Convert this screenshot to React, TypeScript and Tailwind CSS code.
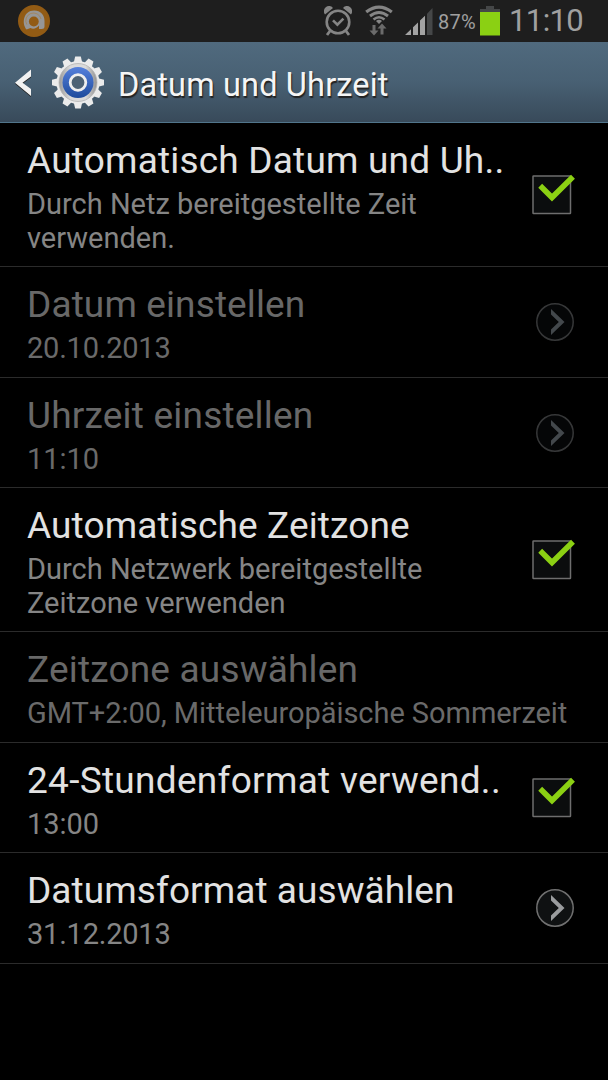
import React from "react";
import { clsx } from "clsx";

type Control = "check" | "more" | "none";

interface Setting {
  title: string;
  summary: string[];
  control: Control;
  disabled?: boolean;
  // row height including the divider
  height: string;
  tracking?: string;
  summaryTracking?: string;
}

const SETTINGS: Setting[] = [
  {
    title: "Automatisch Datum und Uh..",
    summary: ["Durch Netz bereitgestellte Zeit", "verwenden."],
    control: "check",
    height: "h-[144px]",
    tracking: "tracking-[0.2px]",
    summaryTracking: "tracking-[0px]",
  },
  {
    title: "Datum einstellen",
    summary: ["20.10.2013"],
    control: "more",
    disabled: true,
    height: "h-[111px]",
    summaryTracking: "tracking-[-0.22px]",
  },
  { title: "Uhrzeit einstellen", summary: ["11:10"], control: "more", disabled: true, height: "h-[110px]", tracking: "tracking-[0.2px]" },
  {
    title: "Automatische Zeitzone",
    summary: ["Durch Netzwerk bereitgestellte", "Zeitzone verwenden"],
    control: "check",
    height: "h-[144px]",
    summaryTracking: "tracking-[0px]",
  },
  {
    title: "Zeitzone auswählen",
    summary: ["GMT+2:00, Mitteleuropäische Sommerzeit"],
    control: "none",
    disabled: true,
    height: "h-[111px]",
    tracking: "tracking-[0.18px]",
  },
  {
    title: "24-Stundenformat verwend..",
    summary: ["13:00"],
    control: "check",
    height: "h-[110px]",
    tracking: "tracking-[0.29px]",
  },
  {
    title: "Datumsformat auswählen",
    summary: ["31.12.2013"],
    control: "more",
    height: "h-[111px]",
    tracking: "tracking-[0.08px]",
    summaryTracking: "tracking-[-0.22px]",
  },
];

function AvastIcon() {
  return (
    <svg width="32" height="32" viewBox="0 0 32 32" fill="none">
      <circle cx="16" cy="16" r="16" fill="#925b14" />
      <path d="M8.600 24.500C3.500 19 5 5.500 16.200 5.500C22.500 5.500 26.500 10 26.500 16V21.500Q26.500 24 23.500 24H21V20.500C19 23.500 15 24.500 12.500 23Z" fill="#969696" />
      <circle cx="15.800" cy="16.500" r="4.900" fill="#925b14" />
      <path d="M8.800 19.500A7.700 7.700 0 1 1 23 14" stroke="#a87f49" strokeWidth="0.700" />
    </svg>
  );
}

function AlarmIcon() {
  return (
    <svg width="28" height="30" viewBox="0 0 28 30" fill="none" stroke="#858585">
      <circle cx="14" cy="16" r="11.300" strokeWidth="2.600" />
      <path d="M9 14.300l4.400 4.400 6-6" strokeWidth="2.600" />
      <path d="M6 25l-3 4M22 25l3 4" strokeWidth="2.800" />
      <path d="M1 8.500A5 5 0 0 1 9 2zM27 8.500A5 5 0 0 0 19 2z" fill="#858585" stroke="none" />
    </svg>
  );
}

function WifiIcon() {
  return (
    <svg width="28" height="31" viewBox="0 0 28 31" fill="none" stroke="#858585">
      <path d="M1.200 7Q14-2.800 26.800 7" strokeWidth="3.200" />
      <path d="M5 11Q14 3.800 23 11" strokeWidth="2.900" />
      <path d="M8.500 14.500Q14 10 19.500 14.500" strokeWidth="2.600" />
      <path d="M11 16Q14 13.500 17 16L14 19z" fill="#858585" stroke="none" />
      <path d="M9 20v7M17 29.500v-8" stroke="#6b6b6b" strokeWidth="3" />
      <path d="M4.500 25.500h9L9 30.500zM12.500 23.500h9L17 18.500z" fill="#6b6b6b" stroke="none" />
    </svg>
  );
}

function SignalIcon() {
  return (
    <svg width="28" height="27" viewBox="0 0 28 27">
      <path d="M0 27L6 21.200V27zM8 27V19.300L13 14.500V27zM15 27V12.500L20 7.700V27z" fill="#a3a3a3" />
      <path d="M22 27V5.800L27.500 0V27z" fill="#454748" />
    </svg>
  );
}

function BatteryIcon() {
  return (
    <svg width="20" height="30" viewBox="0 0 20 30">
      <path d="M6 0h8v3h6v4H0V3h6z" fill="#454748" />
      <path d="M0 6h20v23.500H0z" fill="#8bd013" />
    </svg>
  );
}

function StatusBar() {
  return (
    <div className="flex h-[42px] shrink-0 items-start bg-[#1e1e1e] pl-[18px] pt-[5px] text-[#a0a0a0]">
      <AvastIcon />
      <div className="ml-[274px] mt-px">
        <AlarmIcon />
      </div>
      <div className="ml-[13px]">
        <WifiIcon />
      </div>
      <div className="ml-[12px] mt-[3px]">
        <SignalIcon />
      </div>
      <span className="ml-[5px] mt-[5px] w-[42px] whitespace-nowrap text-[20px] leading-[24px] tracking-[0.2px]">87%</span>
      <div className="mt-px">
        <BatteryIcon />
      </div>
      <span className="ml-[9px] mt-[-4px] whitespace-nowrap text-[31px] leading-[40px] tracking-[-0.6px]">11:10</span>
    </div>
  );
}

const TEETH = Array.from({ length: 12 }, (_, i) => i * 30);

function GearIcon() {
  return (
    <svg width="52" height="53" viewBox="-26 -26.500 52 53">
      <defs>
        <linearGradient id="hub" x1="0" y1="0" x2="0" y2="1">
          <stop offset="0" stopColor="#5580dc" />
          <stop offset="1" stopColor="#1e4b9c" />
        </linearGradient>
        <linearGradient id="steel" x1="0" y1="0" x2="1" y2="0">
          <stop offset="0" stopColor="#999999" />
          <stop offset="0.300" stopColor="#dadada" />
          <stop offset="0.700" stopColor="#dadada" />
          <stop offset="1" stopColor="#909090" />
        </linearGradient>
      </defs>
      {TEETH.map((deg) => (
        <path key={deg} d="M-4.500-19L-2.800-26H2.800L4.500-19z" fill="#ebebeb" transform={`rotate(${deg})`} />
      ))}
      <circle r="21.500" fill="#ebebeb" />
      <circle r="19" fill="url(#steel)" stroke="#b4b4b4" strokeWidth="0.800" />
      <circle r="15.500" fill="url(#hub)" />
      <circle r="7.800" fill="#4d6275" stroke="#eeeeee" strokeWidth="2.800" />
    </svg>
  );
}

function TitleBar() {
  return (
    <header className="flex h-[81px] shrink-0 items-center border-b border-[#51758b] bg-linear-to-b from-[#506a7e] via-[#486073] to-[#384a5a] pl-[14px]">
      <svg width="18" height="28" viewBox="0 0 18 28" className="mt-px drop-shadow-[0_1px_0_#222]">
        <path d="M17 0.500v7L8.500 13.800 17 20v7L1 13.800z" fill="#f2f2f2" />
      </svg>
      <div className="ml-[20px]">
        <GearIcon />
      </div>
      <h1 className="ml-[14px] mt-[5px] whitespace-nowrap text-[32.5px] leading-[40px] tracking-[0.15px] text-[#f5f5f5] [text-shadow:1px_2px_1px_#222]">
        Datum und Uhrzeit
      </h1>
    </header>
  );
}

function CheckBox() {
  return (
    <svg width="44" height="42" viewBox="0 0 44 42" fill="none" className="mb-[2px] mr-[32px]">
      <rect x="1" y="3" width="37.500" height="37.500" rx="0.500" fill="#0b0d0e" stroke="#6e6e6e" strokeWidth="1.500" />
      <path d="M8.200 12.700L20 24.500 41 3.700" stroke="#8bd013" strokeWidth="5.500" />
    </svg>
  );
}

function MoreButton({ disabled }: { disabled?: boolean }) {
  return (
    <svg width="38" height="38" viewBox="0 0 38 38" fill="none" className="mr-[34px]">
      <circle cx="19" cy="19" r="18.200" fill={disabled ? "#050607" : "#0f1112"} stroke={disabled ? "#363738" : "#707070"} strokeWidth="1.500" />
      <path d="M15 6v5.500l7.800 7.500L15 26.500V32l13.500-13z" fill={disabled ? "#43484c" : "#9a9c9e"} />
    </svg>
  );
}

function SettingRow({ item }: { item: Setting }) {
  return (
    <li
      className={clsx(
        "flex shrink-0 items-center justify-between border-b border-[#2b2b2b]",
        item.height
      )}
    >
      <div className="self-stretch whitespace-nowrap pl-[27px] pt-[16px]">
        <div
          className={clsx(
            "text-[37px] leading-[44px]",
            item.tracking ?? "tracking-[0.12px]",
            item.disabled ? "text-[#686868]" : "text-[#e2e2e2]"
          )}
        >
          {item.title}
        </div>
        <div
          className={clsx(
            "mt-[4px] text-[29px] leading-[34px]",
            item.summaryTracking ?? "tracking-[-0.05px]",
            item.disabled ? "text-[#6a6a6a]" : "text-[#858585]"
          )}
        >
          {item.summary.map((line) => (
            <div key={line}>{line}</div>
          ))}
        </div>
      </div>
      {item.control === "check" && <CheckBox />}
      {item.control === "more" && <MoreButton disabled={item.disabled} />}
    </li>
  );
}

export default function App() {
  return (
    <div className="flex h-[1080px] w-[608px] flex-col overflow-hidden bg-black font-['Roboto',sans-serif]">
      <StatusBar />
      <TitleBar />
      <ul className="flex flex-col">
        {SETTINGS.map((item) => (
          <SettingRow key={item.title} item={item} />
        ))}
      </ul>
    </div>
  );
}
